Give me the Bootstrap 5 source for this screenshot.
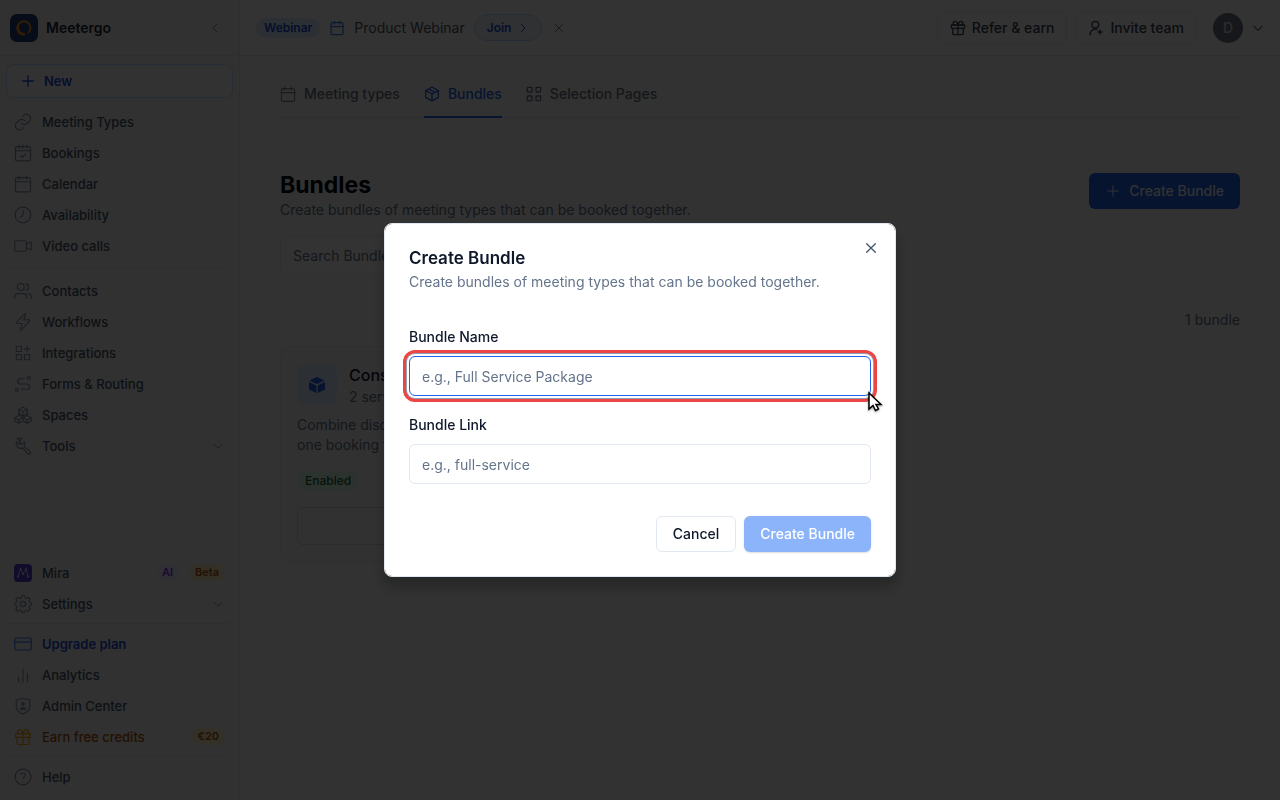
<!DOCTYPE html>
<html lang="en">
<head>
<meta charset="utf-8">
<meta name="viewport" content="width=device-width, initial-scale=1">
<title>Bundles - Meetergo</title>
<link href="https://cdn.jsdelivr.net/npm/bootstrap@5.3.0/dist/css/bootstrap.min.css" rel="stylesheet">
<style>
body { font-family: Inter, "Liberation Sans", sans-serif; font-size: 14px; line-height: 20px; color: #0f172a; background: #f9fafa; }
svg { fill: none; stroke: currentColor; stroke-width: 2; stroke-linecap: round; stroke-linejoin: round; flex-shrink: 0; }
.thin { stroke-width: 1.5; }
.app-shell { min-height: 100vh; }
.app-side { width: 240px; background: #f3f3f4; border-right: 1px solid #e5e7eb; }
.side-head { height: 56px; padding: 0 16px 0 10px; border-bottom: 1px solid #e5e7eb; color: #1f2937; font-weight: 600; }
.side-new { height: 34px; margin: 8px 6px; padding: 0 13px; gap: 8px; border: 1px solid #bfdbfe; border-radius: 8px; background: #f9fafb; color: #1d4ed8; font-size: 13px; font-weight: 600; }
.side-link { height: 31px; padding: 0 14px; gap: 10px; color: #475569; font-size: 13px; font-weight: 500; text-decoration: none; }
.side-link > svg { color: #8491a6; }
.side-link > span:first-of-type { flex-grow: 1; }
.side-link.plan { color: #1d4ed8; font-weight: 600; }
.side-link.plan > svg { color: #3b82f6; }
.side-link.earn { color: #b45309; }
.side-link.earn > svg { color: #f59e0b; }
.side-line { margin: 7px 8px 6px; border-top: 1px solid #e2e5ea; }
.side-foot { padding-bottom: 8px; }
.side-foot .side-line { margin: 4px 8px; }
.mini-pill { padding: 0 6px; border-radius: 9px; font-size: 11px; line-height: 17px; font-weight: 600; }
.pill-ai { background: #ede9fe; color: #7c3aed; }
.pill-beta { background: #fef0c3; color: #b45309; }
.top-bar { height: 56px; padding: 0 15px 0 16px; background: #fff; border-bottom: 1px solid #e5e7eb; }
.notice { gap: 9px; color: #4b5563; }
.notice > svg { color: #3b82f6; }
.faint { color: #858c97; }
.kind-pill { padding: 0 8px; border-radius: 10px; background: #dbeafe; color: #1d4ed8; font-size: 12px; font-weight: 600; }
.join-btn { height: 27px; padding: 0 12px; border: 1px solid #bfdbfe; border-radius: 14px; background: #eff6ff; color: #1d4ed8; font-size: 12px; font-weight: 600; gap: 6px; }
.top-btn { height: 34px; padding: 0 12px; gap: 6px; border: 1px solid #e9eaec; border-radius: 8px; background: #fff; color: #374151; font-weight: 500; }
.user-dot { width: 30px; height: 30px; border-radius: 50%; background: #6b7280; color: #d1d5db; font-weight: 600; }
.page-area { padding: 16px 40px; }
.page-tabs { border-bottom: 1px solid #e5e7eb; gap: 24px; margin-bottom: 55px; }
.page-tabs a { height: 46px; margin-bottom: -1px; gap: 8px; color: #6b7280; font-weight: 500; text-decoration: none; border-bottom: 2px solid transparent; }
.page-tabs a.active { color: #2563eb; border-color: #2563eb; }
h1 { font-size: 23px; line-height: 24px; font-weight: 700; margin: 0 0 3px; color: #030712; }
.soft { color: #64748b; }
.btn-main { height: 36px; padding: 0 16px; border: 0; border-radius: 6px; background: #2563eb; color: #eff6ff; font-weight: 500; }
.btn-line { height: 36px; padding: 0 16px; border: 1px solid #e2e8f0; border-radius: 6px; background: #fff; color: #0f172a; font-weight: 500; }
.btn-main:disabled { background: #8cb4fb; color: #fff; box-shadow: 0 1px 2px #0002; }
.find-box { height: 38px; max-width: 384px; padding: 0 12px; border-color: #e2e8f0; border-radius: 6px; font-size: 14px; margin-top: 16px; }
.find-box::placeholder, .field::placeholder { color: #64748b; opacity: 1; }
.tally { margin: 36px 0 16px; }
.bundle-card { padding: 18px 16px 16px; border: 1px solid #e9ebee; border-radius: 8px; background: #f6f6f7; }
.bundle-card .btn-line { height: 38px; border-color: #d1d5db; background: #f6f6f7; }
.bundle-name { font-size: 16px; font-weight: 500; margin-bottom: 2px; }
.bundle-tile { width: 40px; height: 40px; border-radius: 8px; background: #dbeafe; color: #2563eb; }
.on-pill { padding: 0 8px; border-radius: 10px; background: #dcfce7; color: #166534; font-size: 12px; font-weight: 500; }
.modal-backdrop.show { opacity: .8; }
.bundle-dialog { max-width: 512px; }
.bundle-dialog .modal-content { padding: 24px; border: 1px solid #e2e8f0; border-radius: 8px; box-shadow: 0 10px 15px #0004; }
.bundle-dialog h2 { font-size: 17px; line-height: 20px; font-weight: 600; margin: 0 0 4px; }
.bundle-dialog label { line-height: 14px; font-weight: 500; margin-bottom: 12px; }
.field { height: 40px; padding: 0 12px; border: 1px solid #e2e8f0; border-radius: 6px; font-size: 14px; color: #0f172a; }
.field.picked { border-color: #2563eb; box-shadow: 0 0 0 2px #fff, 0 0 0 3px #94a3b8, 0 0 0 6px #ef4444; }
.form-part { margin-top: 38px; }
.field-next { margin-top: 22px; }
.form-ends { margin-top: 32px; gap: 8px; }
.shut { position: absolute; top: 16px; right: 16px; color: #475569; line-height: 0; }
.pointer { position: absolute; right: -16px; bottom: -19px; filter: drop-shadow(0 1px 1px #0006); z-index: 5; }
</style>
</head>
<body>
<svg width="0" height="0" class="position-absolute" aria-hidden="true">
<defs>
<symbol id="cal" viewBox="0 0 24 24"><rect x="3" y="4" width="18" height="18" rx="2"/><path d="M16 2v4M8 2v4M3 10h18"/></symbol>
<symbol id="plus" viewBox="0 0 24 24"><path d="M4 12h16M12 4v16"/></symbol>
<symbol id="down" viewBox="0 0 24 24"><path d="m5 9 7 7 7-7"/></symbol>
<symbol id="cross" viewBox="0 0 24 24"><path d="M18.500 5.500l-13 13M5.500 5.500l13 13"/></symbol>
<symbol id="gift" viewBox="0 0 24 24"><rect x="2" y="7.500" width="20" height="5" rx="1"/><path d="M12 8v14M20 12.500V20a2 2 0 0 1-2 2H6a2 2 0 0 1-2-2v-7.500M7.500 7.500a2.700 2.700 0 0 1 0-5.500C10 2 11.500 5 12 7.500 12.500 5 14 2 16.500 2a2.700 2.700 0 0 1 0 5.500"/></symbol>
</defs>
</svg>

<div class="app-shell d-flex">
  <nav class="app-side d-flex flex-column flex-shrink-0">
    <div class="side-head d-flex align-items-center">
      <svg class="me-2" width="28" height="28" viewBox="0 0 28 28"><rect width="28" height="28" rx="7" fill="#1e3f77" stroke="none"/><path d="M18.500 18.500A6.500 6.500 0 1 0 9 18" stroke="#e8901c" stroke-width="2"/><path d="M7.800 13a6.300 6.300 0 0 0 6 7.300" stroke="#e8901c" stroke-width="3"/></svg>
      <span class="flex-grow-1">Meetergo</span>
      <svg class="faint thin" width="16" height="16" viewBox="0 0 24 24"><path d="m15 18-6-6 6-6"/></svg>
    </div>
    <button class="side-new d-flex align-items-center" type="button"><svg width="16" height="16"><use href="#plus"/></svg>New</button>
    <a class="side-link d-flex align-items-center" href="#"><svg class="thin" width="18" height="18" viewBox="0 0 24 24"><path d="M9.500 13.500a5.500 5.500 0 0 0 8 .5l3.500-3.500a5.500 5.500 0 0 0-7.700-7.700L11.500 4.500M14.500 10.500a5.500 5.500 0 0 0-8-.5L3 13.500a5.500 5.500 0 0 0 7.700 7.700l1.800-1.700"/></svg><span>Meeting Types</span></a>
    <a class="side-link d-flex align-items-center" href="#"><svg class="thin" width="18" height="18" viewBox="0 0 24 24"><rect x="2" y="3.500" width="20" height="19" rx="2"/><path d="M7 1.500v4M17 1.500v4M12 1.500v4M2 9h20M9 16l2 2 4-4"/></svg><span>Bookings</span></a>
    <a class="side-link d-flex align-items-center" href="#"><svg class="thin" width="18" height="18" viewBox="0 0 24 24"><rect x="2" y="3.500" width="20" height="19" rx="2"/><path d="M7 1.500v4M17 1.500v4M2 9h20"/></svg><span>Calendar</span></a>
    <a class="side-link d-flex align-items-center" href="#"><svg class="thin" width="18" height="18" viewBox="0 0 24 24"><circle cx="12" cy="12" r="10.500"/><path d="M12 5.500V11l-1.500 3-2.500 1"/></svg><span>Availability</span></a>
    <a class="side-link d-flex align-items-center" href="#"><svg class="thin" width="18" height="18" viewBox="0 0 24 24"><rect x="1" y="5" width="15.500" height="14" rx="2"/><path d="m16.500 10.500 4.500-3.500q2-.5 2 1v8q0 1.500-2 1l-4.500-3.500"/></svg><span>Video calls</span></a>
    <div class="side-line"></div>
    <a class="side-link d-flex align-items-center" href="#"><svg class="thin" width="18" height="18" viewBox="0 0 24 24"><path d="M17 22v-2a4.500 4.500 0 0 0-4.500-4.500h-7A4.500 4.500 0 0 0 1 20v2M23 22v-2a4.500 4.500 0 0 0-3.500-4.400M16 2.100a4.500 4.500 0 0 1 0 8.800"/><circle cx="9" cy="6.500" r="4.500"/></svg><span>Contacts</span></a>
    <a class="side-link d-flex align-items-center" href="#"><svg class="thin" width="18" height="18" viewBox="0 0 24 24"><path d="M4 14a1 1 0 0 1-.8-1.600L14.500 1.200a.5.500 0 0 1 .9.500L13 9.200h7a1 1 0 0 1 .8 1.600L9.500 22.800a.5.500 0 0 1-.9-.5L11 14z"/></svg><span>Workflows</span></a>
    <a class="side-link d-flex align-items-center" href="#"><svg class="thin" width="18" height="18" viewBox="0 0 24 24"><rect x="3" y="3" width="7" height="7" rx="1"/><rect x="3" y="14" width="7" height="7" rx="1"/><rect x="14" y="14" width="7" height="7" rx="1"/><path d="M17.500 3v7M14 6.500h7"/></svg><span>Integrations</span></a>
    <a class="side-link d-flex align-items-center" href="#"><svg class="thin" width="18" height="18" viewBox="0 0 24 24"><circle cx="4" cy="20" r="2"/><circle cx="20" cy="4" r="2"/><path d="M10 19h7.500a3.500 3.500 0 0 0 0-7h-9a3.500 3.500 0 0 1 0-7H14"/></svg><span>Forms &amp; Routing</span></a>
    <a class="side-link d-flex align-items-center" href="#"><svg class="thin" width="18" height="18" viewBox="0 0 24 24"><path d="M6.500 12.500 12 15.500v4.500l-5.500 3L1 20v-4.500zM17.500 12.500l5.500 3V20l-5.500 3-5.500-3v-4.500zM12 1.500l5.500 3V10L12 13.500 6.500 10V4.500zM1 15.500l5.500 3 5.500-3M6.500 18.500V23M12 15.500l5.500 3 5.500-3M17.500 18.500V23M6.500 4.500l5.500 3 5.500-3M12 7.500v6M6.500 10v2.500M17.500 10v2.500"/></svg><span>Spaces</span></a>
    <a class="side-link d-flex align-items-center" href="#"><svg class="thin" width="18" height="18" viewBox="0 0 24 24"><path d="M10.500 2.500 7.500 5.500 8 9l3 .5 3-3a6 6 0 0 1-.5 6l8 7a2 2 0 0 1-3 3l-7-8a6 6 0 0 1-8-8l3 3.500L9 9 7.500 5 4 2.500a6 6 0 0 1 6.500 0z"/></svg><span>Tools</span><svg class="thin" width="14" height="14"><use href="#down"/></svg></a>

    <div class="side-foot mt-auto">
      <a class="side-link d-flex align-items-center" href="#"><svg width="18" height="18" viewBox="0 0 18 18"><rect width="18" height="18" rx="4" fill="#5b3fd6" stroke="none"/><path d="M4 12.500 6.500 5 9 10l3-5 2 7.500" stroke="#cfc8f5" stroke-width="1"/><g fill="#e6e1ff" stroke="none"><circle cx="4" cy="12.500" r="1"/><circle cx="6.500" cy="5" r="1"/><circle cx="9" cy="10" r="1"/><circle cx="12" cy="5" r="1"/><circle cx="14" cy="12.500" r="1"/></g></svg><span>Mira</span><span class="mini-pill pill-ai">AI</span><span class="mini-pill pill-beta">Beta</span></a>
      <a class="side-link d-flex align-items-center" href="#"><svg class="thin" width="18" height="18" viewBox="0 0 24 24"><path d="M10 1h4l.7 3.100 2.200.9 2.700-1.700 2.900 2.900-1.800 2.700.9 2.200 3.100.7v3.400l-3.100.7-.9 2.200 1.800 2.700-2.900 2.900-2.700-1.800-2.200.9L14 25h-4l-.7-2.200-2.200-.9-2.700 1.800-2.900-2.900 1.800-2.700-.9-2.200-2.200-.7v-3.400l2.200-.7.9-2.200-1.800-2.700 2.900-2.900L7.100 5l2.200-.9z" transform="translate(1 0) scale(.92)"/><circle cx="12" cy="12" r="3.500"/></svg><span>Settings</span><svg class="thin" width="14" height="14"><use href="#down"/></svg></a>
      <div class="side-line"></div>
      <a class="side-link plan d-flex align-items-center" href="#"><svg class="thin" width="18" height="18" viewBox="0 0 24 24"><rect x="1" y="4" width="22" height="16" rx="2"/><path d="M1 9.500h22"/></svg><span>Upgrade plan</span></a>
      <a class="side-link d-flex align-items-center" href="#"><svg class="thin" width="18" height="18" viewBox="0 0 24 24"><path d="M12 21V4M18 21V10M6 21v-6"/></svg><span>Analytics</span></a>
      <a class="side-link d-flex align-items-center" href="#"><svg class="thin" width="18" height="18" viewBox="0 0 24 24"><path d="M12 1.500c2.500 1.500 5 2 9 2.200V13c0 4.500-4.500 8-9 9.500C7.500 21 3 17.500 3 13V3.700c4-.2 6.500-.7 9-2.200z"/><path d="M7.500 17c.5-5 8.500-5 9 0z" fill="currentColor" stroke="none"/><circle cx="12" cy="9" r="2.500" fill="currentColor" stroke="none"/></svg><span>Admin Center</span></a>
      <a class="side-link earn d-flex align-items-center" href="#"><svg class="thin" width="18" height="18"><use href="#gift"/></svg><span>Earn free credits</span><span class="mini-pill pill-beta">€20</span></a>
      <div class="side-line"></div>
      <a class="side-link d-flex align-items-center" href="#"><svg class="thin" width="18" height="18" viewBox="0 0 24 24"><circle cx="12" cy="12" r="10.500"/><path d="M9 9a3 3 0 0 1 5.900 1c0 2-2.900 2.500-2.900 4M12 17.500v.1"/></svg><span>Help</span></a>
    </div>
  </nav>

  <div class="flex-grow-1">
    <header class="top-bar d-flex align-items-center">
      <div class="notice d-flex align-items-center">
        <span class="kind-pill">Webinar</span>
        <svg width="16" height="16"><use href="#cal"/></svg>
        <span>Product Webinar</span>
        <button class="join-btn d-flex align-items-center" type="button">Join<svg width="12" height="12" viewBox="0 0 24 24"><path d="m9 19 7-7-7-7"/></svg></button>
        <button class="btn p-0 border-0 d-flex faint" type="button" aria-label="Dismiss"><svg class="thin" width="16" height="16"><use href="#cross"/></svg></button>
      </div>
      <div class="d-flex align-items-center gap-2 ms-auto">
        <button class="top-btn d-flex align-items-center" type="button"><svg width="16" height="16"><use href="#gift"/></svg>Refer &amp; earn</button>
        <button class="top-btn d-flex align-items-center" type="button"><svg width="16" height="16" viewBox="0 0 24 24"><circle cx="11" cy="7" r="5"/><path d="M3 22a8 8 0 0 1 10-8M18 15v6M15 18h6"/></svg>Invite team</button>
        <span class="user-dot d-flex align-items-center justify-content-center ms-2">D</span>
        <svg class="soft" width="14" height="14"><use href="#down"/></svg>
      </div>
    </header>

    <main class="page-area">
      <nav class="page-tabs d-flex">
        <a class="d-flex align-items-center" href="#"><svg class="thin" width="16" height="16" viewBox="0 0 24 24"><rect x="2" y="4" width="20" height="19" rx="2"/><path d="M7 1v5M17 1v5M2 10h20"/></svg>Meeting types</a>
        <a class="active d-flex align-items-center" href="#"><svg width="16" height="16" viewBox="0 0 24 24"><path d="M12 1.500 21.500 7v10L12 22.500 2.500 17V7zM2.500 7 12 12l9.500-5M12 12v10.500M7 4.500l9.500 5"/></svg>Bundles</a>
        <a class="d-flex align-items-center" href="#"><svg width="16" height="16" viewBox="0 0 24 24"><rect x="2" y="2" width="7" height="7" rx="1"/><rect x="15" y="2" width="7" height="7" rx="1"/><rect x="15" y="15" width="7" height="7" rx="1"/><rect x="2" y="15" width="7" height="7" rx="1"/></svg>Selection Pages</a>
      </nav>
      <div class="d-flex justify-content-between align-items-start">
        <div><h1>Bundles</h1><p class="soft m-0">Create bundles of meeting types that can be booked together.</p></div>
        <button class="btn-main d-flex align-items-center gap-2" type="button"><svg class="thin" width="16" height="16"><use href="#plus"/></svg>Create Bundle</button>
      </div>
      <input class="find-box form-control" type="search" placeholder="Search Bundles..." aria-label="Search bundles">
      <p class="tally soft text-end">1 bundle</p>
      <div class="row">
        <div class="col-md-6 col-lg-4">
          <article class="bundle-card">
            <div class="d-flex gap-2 mb-2">
              <span class="bundle-tile d-flex align-items-center justify-content-center me-1"><svg width="18" height="18" viewBox="0 0 18 18"><path d="m9 1 7.500 3.500L9 8 1.500 4.500zM1 6l7.300 3.400V17L1 13.500zM17 6 9.700 9.400V17l7.300-3.500z" fill="currentColor" stroke="none"/></svg></span>
              <div><div class="bundle-name">Consulting</div><div class="soft">2 services</div></div>
            </div>
            <p class="soft mb-3">Combine discovery and strategy<br>one booking flow.</p>
            <span class="on-pill d-table mb-3">Enabled</span>
            <button class="btn-line w-100 d-block" type="button">Edit</button>
          </article>
        </div>
      </div>
    </main>
  </div>
</div>

<div class="modal-backdrop show"></div>
<div class="modal show d-block" tabindex="-1" role="dialog" aria-labelledby="dialogTitle">
  <div class="modal-dialog modal-dialog-centered bundle-dialog">
    <form class="modal-content">
      <h2 id="dialogTitle">Create Bundle</h2>
      <p class="soft m-0">Create bundles of meeting types that can be booked together.</p>
      <button class="shut btn p-0 border-0" type="button" aria-label="Close"><svg width="16" height="16"><use href="#cross"/></svg></button>
      <div class="form-part">
        <label class="d-block" for="bundleName">Bundle Name</label>
        <div class="position-relative">
          <input class="field picked form-control" id="bundleName" type="text" placeholder="e.g., Full Service Package">
          <svg class="pointer" width="20" height="24" viewBox="0 0 20 24"><path d="M2 2v16l4-3.500 2.500 5 3-1.500-2.500-4.500h5z" fill="#fff" stroke="#000" stroke-width="1.500" stroke-linejoin="miter"/></svg>
        </div>
      </div>
      <div class="field-next">
        <label class="d-block" for="bundleLink">Bundle Link</label>
        <input class="field form-control" id="bundleLink" type="text" placeholder="e.g., full-service">
      </div>
      <div class="form-ends d-flex justify-content-end">
        <button class="btn-line" type="button">Cancel</button>
        <button class="btn-main" type="submit" disabled>Create Bundle</button>
      </div>
    </form>
  </div>
</div>
<script src="https://cdn.jsdelivr.net/npm/bootstrap@5.3.0/dist/js/bootstrap.bundle.min.js"></script>
</body>
</html>
